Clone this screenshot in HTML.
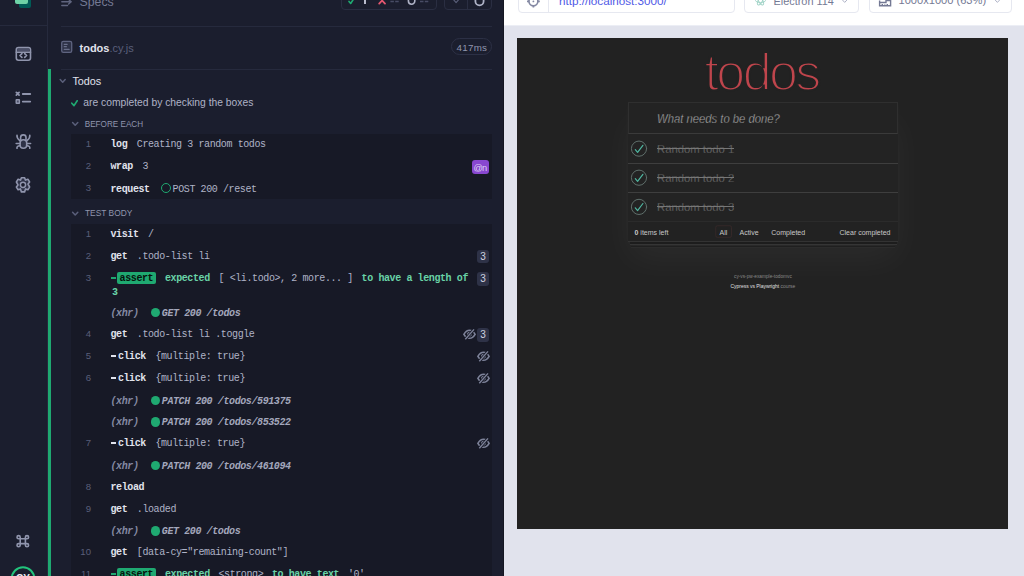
<!DOCTYPE html>
<html><head><meta charset="utf-8">
<style>
*{box-sizing:border-box;margin:0;padding:0}
html,body{width:1024px;height:576px;overflow:hidden;background:#1b1e2e;font-family:"Liberation Sans",sans-serif}
.a{position:absolute}
svg.a{overflow:visible}
.sans{font-family:"Liberation Sans",sans-serif;white-space:pre}
.ln{position:absolute;font-family:"Liberation Sans",sans-serif;font-size:9.6px;color:#5a5f7a;text-align:right;width:20px;left:71px;line-height:12px}
.row{position:absolute;left:110.5px;line-height:12px;font-family:"Liberation Mono",monospace;font-size:10px;letter-spacing:-0.4px;white-space:pre}
.cmd{color:#e1e3ed;font-weight:bold}
.msg{margin-left:9.5px}
.msg.xhr2{margin-left:12px}
.grn.msg{margin-left:9.2px}
.msg2{margin-left:8.7px}
.dash{display:inline-block;width:5.4px;height:1.8px;background:#e1e3ed;vertical-align:2px;margin-right:2px}
.asrt .dash{background:#1fa971;margin-right:1.2px}
.arg{color:#afb3c7}
.grn{color:#69d3a7;font-weight:bold}
.xhr{color:#858aa3;font-style:italic;font-weight:bold}
.xhr2{color:#a3a7bc;font-style:italic;font-weight:bold}
.dot{display:inline-block;width:9.5px;height:9.5px;border-radius:50%;background:#1fa971;vertical-align:-1.5px;margin-right:1.8px}
.ring{display:inline-block;width:10.2px;height:10.2px;border-radius:50%;border:1.6px solid #1fa971;vertical-align:-1.5px;margin-right:1.7px;margin-left:1.5px}
.abadge{background:#1fa971;color:#06140d;border-radius:2px;padding:0.9px 2.6px 0.3px 2.5px;font-weight:bold}
.badge{position:absolute;background:#2e3247;color:#d0d2e0;border-radius:3px;font-size:10px;text-align:center;line-height:14px;font-family:"Liberation Sans",sans-serif}
.todo{left:657px;font-size:11.3px;line-height:14px;color:#7a7a7a;-webkit-text-stroke:0.3px #232323}
.strike{position:absolute;left:657px;width:77px;height:1px;background:#777}
.foot{top:227.5px;font-size:7px;line-height:10px;color:#c8c8c8}
</style></head>
<body>
<!-- left sidebar -->
<div class="a" style="left:47px;top:0;width:1px;height:576px;background:#262a3d"></div>
<div class="a" style="left:0;top:25px;width:47px;height:1px;background:#262a3d"></div>
<!-- logo -->
<div class="a" style="left:19px;top:0;width:12px;height:7.7px;background:#005b56;border-radius:0 0 2px 2px"></div>
<div class="a" style="left:15.3px;top:0;width:12.8px;height:4.4px;background:#6dd3a6;border-radius:0 0 2px 2px"></div>

<!-- sidebar icons -->
<svg class="a" style="left:0;top:0" width="48" height="576" viewBox="0 0 48 576">
 <g fill="none" stroke="#9095ad" stroke-width="1.6" stroke-linecap="round" stroke-linejoin="round">
  <rect x="16.3" y="47.6" width="14.2" height="12.6" rx="2.2"/>
  <rect x="17.2" y="48.6" width="12.4" height="2.8" fill="#4b4f68" stroke="none"/>
  <path d="M16.3 52.2 H30.5"/>
  <path d="M21.9 53.7 L20 55.5 L21.9 57.3 M24.7 53.7 L26.6 55.5 L24.7 57.3" stroke-width="1.7"/>
  <!-- list icon -->
  <path d="M16.3 92.3 L19.1 95.1 M19.1 92.3 L16.3 95.1" stroke-width="1.7"/>
  <path d="M22.8 94 H30.2 M22.8 101.6 H30.2" stroke-width="1.9"/>
  <rect x="16.2" y="99.8" width="3.2" height="3.4" fill="#4b4f68" stroke-width="1.4" rx="0.3"/>
  <!-- bug -->
  <path d="M20.6 139.8 V137.6 A2.7 2.7 0 0 1 26 137.6 V139.8"/>
  <rect x="20.1" y="139.8" width="6.6" height="8.4" rx="3.3" fill="#2e3247"/>
  <path d="M17 135.2 Q16.6 138.2 19.8 140.6 M29.8 135.2 Q30.2 138.2 27 140.6 M16.2 143.5 H20 M30.6 143.5 H26.8 M17 148.3 Q16.6 146 19.8 145.8 M29.8 148.3 Q30.2 146 27 145.8"/>
  <!-- gear -->
  <path d="M21.4 177.8 H24.6 L25.5 180.1 L27.9 179.2 L29.6 182 L28 184 L29.6 187 L27.9 189.8 L25.5 188.9 L24.6 191.9 H21.4 L20.5 188.9 L18.1 189.8 L16.4 187 L18 184.9 L16.4 182 L18.1 179.2 L20.5 180.1 Z" fill="#2e3247"/>
  <circle cx="23" cy="184.8" r="2.6" stroke-width="1.5" fill="#1b1e2e"/>
  <!-- command -->
  <path d="M20.2 538.8 V543.6 M25.4 538.8 V543.6 M20.2 538.8 H25.4 M20.2 543.6 H25.4 M20.2 538.8 H18.6 A1.6 1.6 0 1 1 20.2 537.2 V538.8 M25.4 538.8 V537.2 A1.6 1.6 0 1 1 27 538.8 H25.4 M20.2 543.6 V545.2 A1.6 1.6 0 1 1 18.6 543.6 H20.2 M25.4 543.6 H27 A1.6 1.6 0 1 1 25.4 545.2 V543.6" stroke-width="1.6"/>
 </g>
 <circle cx="23" cy="578.4" r="11.2" fill="#1b1e2e" stroke="#22c47c" stroke-width="2"/>
 <text x="23" y="581.6" text-anchor="middle" font-family="Liberation Sans" font-weight="bold" font-size="10" fill="#eceef6">CY</text>
</svg>

<!-- reporter header -->
<div class="a" style="left:60.5px;top:26px;width:431.5px;height:1px;background:#262a3d"></div>
<div class="a" style="left:60.5px;top:68.5px;width:431.5px;height:1px;background:#262a3d"></div>
<svg class="a" style="left:0;top:0" width="504" height="120" viewBox="0 0 504 120">
 <g fill="none" stroke="#747994" stroke-width="1.4" stroke-linecap="round" stroke-linejoin="round">
  <path d="M61.8 1.7 H70.5 M68.6 -0.5 L71.2 1.8 L68.6 4.1 M61.8 5.5 H67.5" stroke="#60657f"/>
  <rect x="61.7" y="41.4" width="10" height="11" rx="1.6" fill="#2e3247" stroke="#5f6480" stroke-width="1.3"/>
  <path d="M64.2 44.3 H67.2 M64.2 46.7 H66.4 M64.2 49.3 H69.2" stroke="#6a6f8a" stroke-width="1.2"/>
  <!-- chevrons -->
  <path d="M60.2 79.6 L62.7 82.3 L65.2 79.6" stroke="#5a5f7a" stroke-width="1.5"/>
  <path d="M72.6 122.5 L75.2 125.2 L77.8 122.5" stroke="#5a5f7a" stroke-width="1.5"/>
  <path d="M72.6 212.3 L75.2 215 L77.8 212.3" stroke="#5a5f7a" stroke-width="1.5"/>
  <!-- green check -->
  <path d="M71.8 103.2 L74 105.6 L77.2 100.8" stroke="#1fa971" stroke-width="1.7"/>
  <!-- stats -->
  <path d="M349 1.4 L350.7 3.5 L353.3 -0.6" stroke="#1fa971" stroke-width="1.6"/>
  <path d="M365 -3 V3.9" stroke="#c3c6d6" stroke-width="1.9" stroke-linecap="butt"/>
  <path d="M379.2 -2.6 L385 3.6 M385 -2.6 L379.2 3.6" stroke="#e45770" stroke-width="1.8"/>
  <path d="M390.4 1.4 H393.9 M395.2 1.4 H398.7 M420 1.4 H423.5 M424.8 1.4 H428.3" stroke="#484c65" stroke-width="1.5" stroke-linecap="butt"/>
  <path d="M408.4 -2 V1 A3.2 3.2 0 0 0 414.8 1 V-2" stroke="#afb3c7" stroke-width="1.6"/>
  <path d="M453.4 -0.5 L456.1 2.6 L458.8 -0.5" stroke="#5a5f7a" stroke-width="1.1"/>
  <path d="M475.4 -2 V1.2 A4.1 4.1 0 0 0 483.6 1.2 V-2" stroke="#afb3c7" stroke-width="1.8"/>
 </g>
</svg>
<div class="a sans" style="left:79.5px;top:-5.8px;font-size:12.3px;line-height:16px;color:#747994">Specs</div>

<div class="a sans" style="left:79.5px;top:40.5px;font-size:11px;line-height:14px;color:#e1e3ed"><b>todos</b><span style="color:#5a5f7a">.cy.js</span></div>

<!-- 417ms -->
<div class="a" style="left:451px;top:38px;width:41px;height:17px;border:1px solid #2c3045;border-radius:9px"></div>
<div class="a sans" style="left:456.6px;top:40.5px;font-size:9.8px;line-height:13px;color:#9095ad;letter-spacing:0.25px">417ms</div>

<!-- stats box -->
<div class="a" style="left:340.5px;top:-10px;width:96.5px;height:19.5px;border:1px solid #2a2e42;border-radius:4px"></div>
<div class="a" style="left:443.5px;top:-10px;width:48px;height:20.2px;border:1px solid #2a2e42;border-radius:4px"></div>
<div class="a" style="left:467px;top:0;width:1px;height:10px;background:#2a2e42"></div>

<!-- green bar -->
<div class="a" style="left:48px;top:69px;width:3px;height:507px;background:#1fa971"></div>

<!-- suite -->
<div class="a sans" style="left:72.4px;top:74.7px;font-size:10.8px;line-height:13px;color:#e1e3ed">Todos</div>
<div class="a sans" style="left:83.3px;top:96px;font-size:10.3px;line-height:13px;color:#afb3c7">are completed by checking the boxes</div>
<div class="a sans" style="left:84.7px;top:118.5px;font-size:8.16px;line-height:11px;color:#9095ad">BEFORE EACH</div>
<div class="a sans" style="left:85px;top:208.1px;font-size:8.4px;line-height:11px;color:#9095ad">TEST BODY</div>

<!-- blocks -->
<div class="a" style="left:70.5px;top:133.5px;width:421px;height:65px;background:#171926"></div>
<div class="a" style="left:70.5px;top:223.6px;width:421px;height:353px;background:#171926"></div>

<div class="ln" style="top:138.30px">1</div>
<div class="row" style="top:139.30px"><span class="cmd">log</span><span class="msg arg">Creating 3 random todos</span></div>
<div class="ln" style="top:160.20px">2</div>
<div class="row" style="top:161.20px"><span class="cmd">wrap</span><span class="msg arg">3</span></div>
<div class="ln" style="top:182.25px">3</div>
<div class="row" style="top:183.25px"><span class="cmd">request</span><span class="msg arg"><span class="ring"></span>POST 200 /reset</span></div>
<div class="badge" style="left:471.8px;top:160px;width:17.2px;height:14.2px;background:#8847d0;color:#ddd0f2;letter-spacing:-0.8px;font-size:9.2px;padding-right:0.8px;padding-top:0.8px">@n</div>

<div class="ln" style="top:228.00px">1</div>
<div class="row" style="top:229.00px"><span class="cmd">visit</span><span class="msg arg">/</span></div>
<div class="ln" style="top:249.90px">2</div>
<div class="row" style="top:250.90px"><span class="cmd">get</span><span class="msg arg">.todo-list li</span></div>
<div class="ln" style="top:271.70px">3</div>
<div class="row" style="top:272.70px"><span class="asrt"><span class="dash"></span></span><span class="abadge">assert</span><span class="msg grn">expected</span><span class="msg2 arg">[ &lt;li.todo&gt;, 2 more... ]</span><span class="msg2 grn">to have a length of</span></div>
<div class="row" style="top:286.90px"><span class="grn" style="margin-left:1.5px">3</span></div>
<div class="row" style="top:307.80px"><span class="xhr">(xhr)</span><span class="msg xhr2"><span class="dot"></span>GET 200 /todos</span></div>
<div class="ln" style="top:327.80px">4</div>
<div class="row" style="top:328.80px"><span class="cmd">get</span><span class="msg arg">.todo-list li .toggle</span></div>
<div class="ln" style="top:349.75px">5</div>
<div class="row" style="top:350.75px"><span class="dash"></span><span class="cmd">click</span><span class="msg arg">{multiple: true}</span></div>
<div class="ln" style="top:371.90px">6</div>
<div class="row" style="top:372.90px"><span class="dash"></span><span class="cmd">click</span><span class="msg arg">{multiple: true}</span></div>
<div class="row" style="top:395.70px"><span class="xhr">(xhr)</span><span class="msg xhr2"><span class="dot"></span>PATCH 200 /todos/591375</span></div>
<div class="row" style="top:417.20px"><span class="xhr">(xhr)</span><span class="msg xhr2"><span class="dot"></span>PATCH 200 /todos/853522</span></div>
<div class="ln" style="top:436.80px">7</div>
<div class="row" style="top:437.80px"><span class="dash"></span><span class="cmd">click</span><span class="msg arg">{multiple: true}</span></div>
<div class="row" style="top:460.50px"><span class="xhr">(xhr)</span><span class="msg xhr2"><span class="dot"></span>PATCH 200 /todos/461094</span></div>
<div class="ln" style="top:481.00px">8</div>
<div class="row" style="top:482.00px"><span class="cmd">reload</span></div>
<div class="ln" style="top:502.90px">9</div>
<div class="row" style="top:503.90px"><span class="cmd">get</span><span class="msg arg">.loaded</span></div>
<div class="row" style="top:526.30px"><span class="xhr">(xhr)</span><span class="msg xhr2"><span class="dot"></span>GET 200 /todos</span></div>
<div class="ln" style="top:546.20px">10</div>
<div class="row" style="top:547.20px"><span class="cmd">get</span><span class="msg arg">[data-cy="remaining-count"]</span></div>
<div class="ln" style="top:568.00px">11</div>
<div class="row" style="top:569.00px"><span class="asrt"><span class="dash"></span></span><span class="abadge">assert</span><span class="msg grn">expected</span><span class="msg2 arg">&lt;strong&gt;</span><span class="msg2 grn">to have text</span><span class="msg2 arg">'0'</span></div>
<div class="badge" style="left:477.2px;top:249.5px;width:11.6px;height:13.6px">3</div>
<div class="badge" style="left:477.2px;top:272px;width:11.6px;height:13.6px">3</div>
<div class="badge" style="left:477.2px;top:328px;width:11.6px;height:14.2px">3</div>
<svg class="a" style="left:463.0px;top:328.8px" width="13" height="11" viewBox="0 0 13 11"><path d="M0.9 5.3 C2.8 2.1 4.8 1.3 6.5 1.3 C8.2 1.3 10.2 2.1 12.1 5.3 C10.2 8.5 8.2 9.3 6.5 9.3 C4.8 9.3 2.8 8.5 0.9 5.3Z" fill="none" stroke="#7d8299" stroke-width="1.6"/><circle cx="6.5" cy="5.3" r="1.8" fill="none" stroke="#7d8299" stroke-width="1.3"/><path d="M2.3 10.2 L11 0.4" stroke="#171926" stroke-width="3"/><path d="M2.3 10.2 L11 0.4" stroke="#7d8299" stroke-width="1.4"/></svg>
<svg class="a" style="left:476.6px;top:351.0px" width="13" height="11" viewBox="0 0 13 11"><path d="M0.9 5.3 C2.8 2.1 4.8 1.3 6.5 1.3 C8.2 1.3 10.2 2.1 12.1 5.3 C10.2 8.5 8.2 9.3 6.5 9.3 C4.8 9.3 2.8 8.5 0.9 5.3Z" fill="none" stroke="#7d8299" stroke-width="1.6"/><circle cx="6.5" cy="5.3" r="1.8" fill="none" stroke="#7d8299" stroke-width="1.3"/><path d="M2.3 10.2 L11 0.4" stroke="#171926" stroke-width="3"/><path d="M2.3 10.2 L11 0.4" stroke="#7d8299" stroke-width="1.4"/></svg>
<svg class="a" style="left:476.6px;top:373.2px" width="13" height="11" viewBox="0 0 13 11"><path d="M0.9 5.3 C2.8 2.1 4.8 1.3 6.5 1.3 C8.2 1.3 10.2 2.1 12.1 5.3 C10.2 8.5 8.2 9.3 6.5 9.3 C4.8 9.3 2.8 8.5 0.9 5.3Z" fill="none" stroke="#7d8299" stroke-width="1.6"/><circle cx="6.5" cy="5.3" r="1.8" fill="none" stroke="#7d8299" stroke-width="1.3"/><path d="M2.3 10.2 L11 0.4" stroke="#171926" stroke-width="3"/><path d="M2.3 10.2 L11 0.4" stroke="#7d8299" stroke-width="1.4"/></svg>
<svg class="a" style="left:476.6px;top:438.0px" width="13" height="11" viewBox="0 0 13 11"><path d="M0.9 5.3 C2.8 2.1 4.8 1.3 6.5 1.3 C8.2 1.3 10.2 2.1 12.1 5.3 C10.2 8.5 8.2 9.3 6.5 9.3 C4.8 9.3 2.8 8.5 0.9 5.3Z" fill="none" stroke="#7d8299" stroke-width="1.6"/><circle cx="6.5" cy="5.3" r="1.8" fill="none" stroke="#7d8299" stroke-width="1.3"/><path d="M2.3 10.2 L11 0.4" stroke="#171926" stroke-width="3"/><path d="M2.3 10.2 L11 0.4" stroke="#7d8299" stroke-width="1.4"/></svg>

<!-- reporter right edge -->
<div class="a" style="left:491.5px;top:26px;width:12.5px;height:550px;background:#1b1e2e"></div>
<div class="a" style="left:503px;top:0;width:1.5px;height:576px;background:#151722"></div>

<!-- AUT side -->
<div class="a" style="left:504px;top:0;width:520px;height:576px;background:#e1e3ed"></div>
<div class="a" style="left:504px;top:0;width:520px;height:26px;background:#fff;border-bottom:1px solid #eceef5"></div>
<div class="a" style="left:517.5px;top:-10px;width:217px;height:23px;border:1px solid #e6e8f0;border-radius:4px;background:#fff"></div>
<div class="a" style="left:548px;top:0;width:1px;height:12.5px;background:#e6e8f0"></div>
<svg class="a" style="left:0;top:0" width="1024" height="30" viewBox="0 0 1024 30">
 <g fill="none" stroke="#9095ad" stroke-width="1.4">
  <circle cx="533.4" cy="1.3" r="4.5" stroke="#8489a3" stroke-width="1.7"/>
  <circle cx="533.4" cy="1.4" r="0.9" fill="#8489a3" stroke="none"/>
  <path d="M527 1.3 H529.2 M537.6 1.3 H539.8 M533.4 5.5 V7.4" stroke="#8489a3" stroke-width="1.7"/>
  <ellipse cx="760.5" cy="0.5" rx="5" ry="2" stroke="#9fd3c6" stroke-width="0.9"/><ellipse cx="760.5" cy="0.5" rx="5" ry="2" transform="rotate(60 760.5 0.5)" stroke="#9fd3c6" stroke-width="0.9"/><ellipse cx="760.5" cy="0.5" rx="5" ry="2" transform="rotate(-60 760.5 0.5)" stroke="#9fd3c6" stroke-width="0.9"/>
  <path d="M842.3 -0.2 L844.7 2.4 L847.1 -0.2" stroke="#afb3c7" stroke-width="1"/>
  <path d="M879.6 0.5 V5.8 H890.6 V0.5 H886 V2.5 H879.6 M882.3 5.6 V4 M884.8 5.6 V4.4 M887.3 5.6 V4" stroke="#747994" stroke-width="1.4"/>
  <path d="M995 -0.2 L997.4 2.4 L999.8 -0.2" stroke="#afb3c7" stroke-width="1"/>
 </g>
</svg>
<div class="a sans" style="left:559px;top:-7px;font-size:11.7px;line-height:15px;color:#4f5ae6">http://localhost:3000/</div>
<div class="a" style="left:744px;top:-10px;width:114.5px;height:23px;border:1px solid #e6e8f0;border-radius:4px;background:transparent"></div>
<div class="a sans" style="left:773.5px;top:-6.5px;font-size:10.9px;line-height:15px;color:#747994">Electron 114</div>
<div class="a" style="left:868.5px;top:-10px;width:143px;height:22.5px;border:1px solid #e6e8f0;border-radius:4px;background:transparent"></div>
<div class="a sans" style="left:898.5px;top:-7px;font-size:11.1px;line-height:15px;color:#747994">1000x1000 (63%)</div>

<!-- AUT frame -->
<div class="a" style="left:517px;top:38px;width:491px;height:491px;background:#222222;overflow:hidden">
 <div class="a" style="left:111px;top:64px;width:270px;height:140px;border-radius:2px;box-shadow:0 2px 4px 0 rgba(255,255,255,0.03),0 18px 36px 0 rgba(255,255,255,0.045)"></div>
</div>
<div class="a sans" style="left:704.5px;top:41.5px;font-size:52px;line-height:60px;color:#bf454c;-webkit-text-stroke:2.2px #222;letter-spacing:-2.6px">todos</div>
<div class="a" style="left:628px;top:102px;width:270px;height:32px;border:1px solid #2f2f2f;border-bottom-color:#3a3a3a;background:#232323"></div>
<div class="a sans" style="left:656.5px;top:110.5px;font-size:13.2px;line-height:16px;color:#bdbdbd;font-style:italic;-webkit-text-stroke:0.4px #232323;transform:scaleX(0.855);transform-origin:0 0">What needs to be done?</div>
<div class="a" style="left:628px;top:134px;width:270px;height:87px;background:#232323"></div>
<div class="a" style="left:628px;top:163px;width:270px;height:1px;background:#3e3e3e"></div>
<div class="a" style="left:628px;top:192px;width:270px;height:1px;background:#3e3e3e"></div>
<div class="a" style="left:628px;top:221px;width:270px;height:20px;background:#222;border-top:1px solid #2b2b2b"></div>
<div class="a" style="left:628px;top:240.6px;width:270px;height:1px;background:#333"></div>
<div class="a" style="left:629.5px;top:241.6px;width:267px;height:3px;background:#1d1d1d;border-bottom:1px solid #353535"></div>
<div class="a" style="left:631px;top:245.6px;width:264px;height:2px;background:#1f1f1f;border-bottom:1px solid #2c2c2c"></div>
<svg class="a" style="left:0;top:0" width="1024" height="576" viewBox="0 0 1024 576">
 <g fill="none" stroke-linecap="round" stroke-linejoin="round">
  <circle cx="639" cy="148.65" r="7.6" stroke="#5f6f6b" stroke-width="1"/>
  <path d="M635.3 149.6 L637.6 152.4 L642.9 145.3" stroke="#4fb8a2" stroke-width="1.15"/>
  <circle cx="639" cy="177.7" r="7.6" stroke="#5f6f6b" stroke-width="1"/>
  <path d="M635.3 178.6 L637.6 181.4 L642.9 174.3" stroke="#4fb8a2" stroke-width="1.15"/>
  <circle cx="639" cy="206.9" r="7.6" stroke="#5f6f6b" stroke-width="1"/>
  <path d="M635.3 207.8 L637.6 210.6 L642.9 203.5" stroke="#4fb8a2" stroke-width="1.15"/>
 </g>
 <rect x="715.8" y="225.8" width="15.7" height="11.5" rx="1.5" fill="none" stroke="#3a2a2a" stroke-width="0.8"/>
</svg>
<div class="a sans todo" style="top:142px">Random todo 1</div><div class="strike" style="top:148.3px"></div>
<div class="a sans todo" style="top:171px">Random todo 2</div><div class="strike" style="top:177.3px"></div>
<div class="a sans todo" style="top:200px">Random todo 3</div><div class="strike" style="top:206.4px"></div>
<div class="a sans foot" style="left:634.5px"><b>0</b> items left</div>
<div class="a sans foot" style="left:719.5px">All</div>
<div class="a sans foot" style="left:739.5px">Active</div>
<div class="a sans foot" style="left:771.3px">Completed</div>
<div class="a sans foot" style="left:839.5px">Clear completed</div>
<div class="a sans" style="left:734px;top:272.6px;font-size:4.75px;line-height:7px;color:#888">cy-vs-pw-example-todomvc</div>
<div class="a sans" style="left:730.5px;top:282.6px;font-size:4.95px;line-height:7px;color:#e0e0e0">Cypress vs Playwright <span style="color:#8a8a8a">course</span></div>
</body></html>
